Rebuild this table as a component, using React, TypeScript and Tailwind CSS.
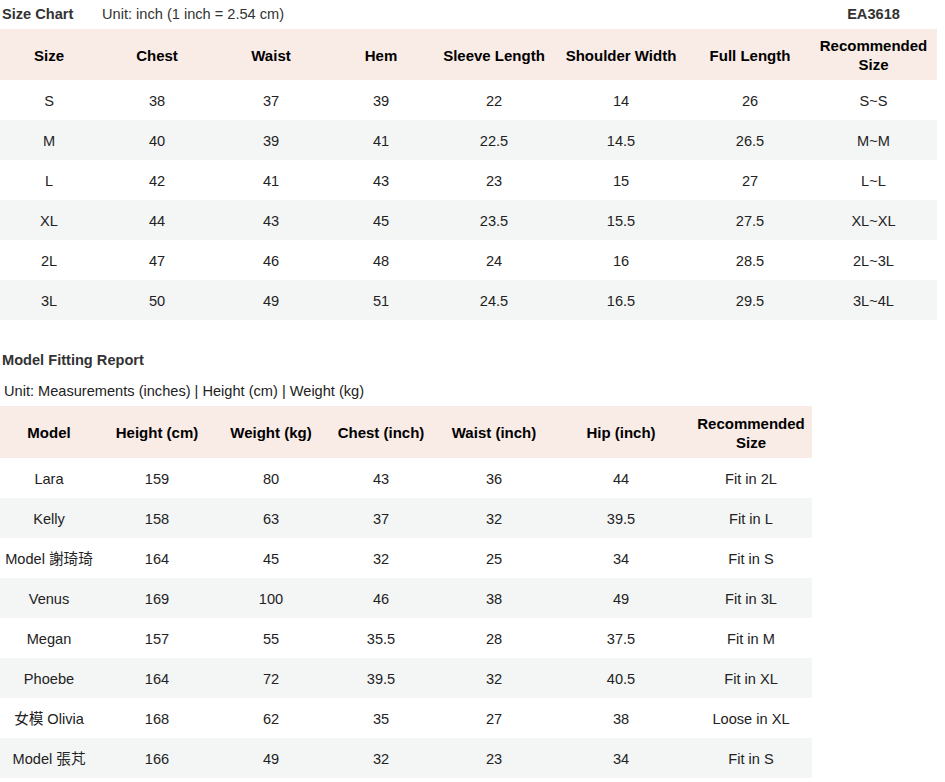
const widths = ["w-[98px]", "w-[118px]", "w-[110px]", "w-[110px]", "w-[116px]", "w-[138px]", "w-[120px]", "w-[127px]"];

const sizeHead = ["Size", "Chest", "Waist", "Hem", "Sleeve Length", "Shoulder Width", "Full Length", "Recommended Size"];
const sizeRows = [
    ["S", "38", "37", "39", "22", "14", "26", "S~S"],
    ["M", "40", "39", "41", "22.5", "14.5", "26.5", "M~M"],
    ["L", "42", "41", "43", "23", "15", "27", "L~L"],
    ["XL", "44", "43", "45", "23.5", "15.5", "27.5", "XL~XL"],
    ["2L", "47", "46", "48", "24", "16", "28.5", "2L~3L"],
    ["3L", "50", "49", "51", "24.5", "16.5", "29.5", "3L~4L"],
];

const modelWidths = ["w-[98px]", "w-[118px]", "w-[110px]", "w-[110px]", "w-[116px]", "w-[138px]", "w-[122px]"];
const modelHead = ["Model", "Height (cm)", "Weight (kg)", "Chest (inch)", "Waist (inch)", "Hip (inch)", "Recommended Size"];
const modelRows = [
    ["Lara", "159", "80", "43", "36", "44", "Fit in 2L"],
    ["Kelly", "158", "63", "37", "32", "39.5", "Fit in L"],
    ["Model 謝琦琦", "164", "45", "32", "25", "34", "Fit in S"],
    ["Venus", "169", "100", "46", "38", "49", "Fit in 3L"],
    ["Megan", "157", "55", "35.5", "28", "37.5", "Fit in M"],
    ["Phoebe", "164", "72", "39.5", "32", "40.5", "Fit in XL"],
    ["女模 Olivia", "168", "62", "35", "27", "38", "Loose in XL"],
    ["Model 張芃", "166", "49", "32", "23", "34", "Fit in S"],
];

const Table = ({ head, rows, cols, headH }: { head: string[]; rows: string[][]; cols: string[]; headH: string }) => (
    <div className="w-fit">
        <div className={`flex bg-[#f9ebe6] ${headH}`}>
            {head.map((h, i) => (
                <div
                    key={h}
                    className={`${cols[i]} flex items-center justify-center pt-[1px] text-center text-[15px] font-bold leading-[19px] whitespace-nowrap text-black`}>
                    {h === "Recommended Size" ? (
                        <span>
                            Recommended
                            <br />
                            Size
                        </span>
                    ) : (
                        h
                    )}
                </div>
            ))}
        </div>
        {rows.map((r, ri) => (
            <div key={ri} className={`flex h-[40px] ${ri % 2 === 1 ? "bg-[#f4f6f6]" : "bg-white"}`}>
                {r.map((c, ci) => (
                    <div key={ci} className={`${cols[ci]} flex items-center justify-center pt-[3px] text-[#222]`}>
                        {c}
                    </div>
                ))}
            </div>
        ))}
    </div>
);

const App = () => {
    return (
        <div
            className="h-[782px] w-[945px] overflow-hidden bg-white text-[14.6px]"
            style={{ fontFamily: '"Liberation Sans", Arial, "Noto Sans CJK TC", sans-serif' }}>
            <div className="flex h-[29px] w-[937px] items-center">
                <p className="w-[102px] pl-[2px] font-bold text-[#333]">Size Chart</p>
                <p className="grow text-[#333]">Unit: inch (1 inch = 2.54 cm)</p>
                <p className="w-[127px] text-center font-bold text-[#333]">EA3618</p>
            </div>
            <Table head={sizeHead} rows={sizeRows} cols={widths} headH="h-[51px]" />
            <p className="mt-[30px] h-[20px] pl-[2px] leading-[20px] font-bold text-[#333]">Model Fitting Report</p>
            <p className="mt-[11px] mb-[5px] h-[20px] pl-[4px] leading-[20px] text-[#222]">
                Unit: Measurements (inches) | Height (cm) | Weight (kg)
            </p>
            <Table head={modelHead} rows={modelRows} cols={modelWidths} headH="h-[52px]" />
        </div>
    );
};

export default App;
